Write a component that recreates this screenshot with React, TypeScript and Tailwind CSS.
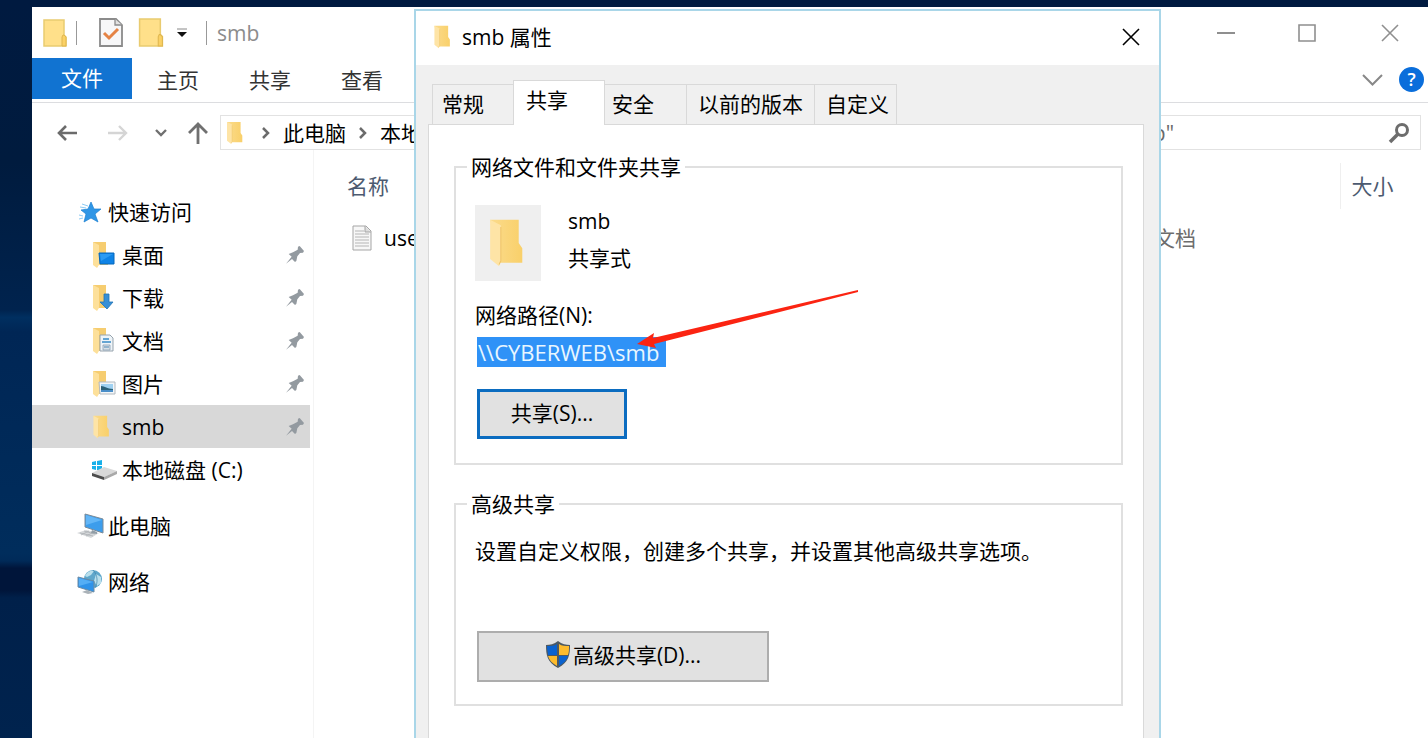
import type { ReactNode } from "react";

type IconProps = { className?: string };

function FolderBase() {
  return (
    <>
      <path d="M3 1h13v15l2 3v5H7z" fill="#f6cd70" />
      <path d="M3 1l6 3v20l-2 3-4-3z" fill="#fde09a" />
    </>
  );
}

function FolderIcon({ className }: IconProps) {
  return (
    <svg viewBox="0 0 20 28" className={className}>
      <defs>
        <linearGradient id="folderBack" x1="0" x2="1">
          <stop offset="0" stopColor="#fbdb8c" />
          <stop offset="1" stopColor="#f9d06a" />
        </linearGradient>
      </defs>
      <path d="M0 1h16v13l2 3v8H5z" fill="url(#folderBack)" />
      <path d="M0 1l6 3v20l-1 3-5-4z" fill="#fee4a6" />
      <path d="M6 5v19l-1 2" fill="none" stroke="#efc469" strokeWidth=".6" />
    </svg>
  );
}

function ClosedFolderIcon({ className }: IconProps) {
  return (
    <svg viewBox="0 0 24 28" className={className}>
      <path d="M1 1h20v15l2 2v9H1z" fill="#ffe08a" stroke="#e9cb70" strokeWidth="1.5" />
      <path d="M19 27v-9l1-2h1l2 2v9z" fill="#fbd165" stroke="#dfb64e" />
    </svg>
  );
}

function PropertiesIcon() {
  return (
    <svg viewBox="0 0 24 29" className="w-6 h-[29px]">
      <path d="M1 1h16l6 6v21H1z" fill="#f7f7f8" stroke="#8b8b8b" strokeWidth="1.8" />
      <path d="M16 1v6h7" fill="#e2e2e2" stroke="#8b8b8b" strokeWidth="1.3" />
      <path d="M5 15l5 5 9-9" fill="none" stroke="#e58345" strokeWidth="3" />
    </svg>
  );
}

function StarIcon() {
  return (
    <svg viewBox="0 0 24 24" className="w-6 h-6">
      <path
        d="M13 2l3 7h7l-6 5 3 8-7-4-7 4 2-8-5-4 7-1z"
        fill="#2f96e6"
        stroke="#1b7fd1"
        strokeWidth=".7"
      />
      <path d="M4 4l6 2M2 7l6 1M1 15l4 1M1 19l4-1" stroke="#8ecbf4" strokeWidth="1" />
    </svg>
  );
}

function DesktopIcon() {
  return (
    <svg viewBox="0 0 26 28" className="w-[26px] h-7">
      <FolderBase />
      <path d="M9 12h15v11H10z" fill="#0f83e6" stroke="#0768bd" />
      <path d="M10 13h13l-12 7z" fill="#2c9bf3" />
    </svg>
  );
}

function DownloadIcon() {
  return (
    <svg viewBox="0 0 26 28" className="w-[26px] h-7">
      <FolderBase />
      <path d="M14 10h5v8h4l-6 7-7-7h4z" fill="#378fd6" stroke="#2273b5" strokeWidth=".8" />
    </svg>
  );
}

function DocumentsIcon() {
  return (
    <svg viewBox="0 0 26 28" className="w-[26px] h-7">
      <FolderBase />
      <path d="M10 8h10l3 3v13H10z" fill="#eef4f8" stroke="#97a3ad" />
      <path d="M13 12h6M12 15h9" stroke="#398ac5" strokeWidth="1.6" />
      <path d="M13 18h7v5h-7z" fill="#d7e1e8" stroke="#8aa0b1" strokeWidth=".8" />
      <path d="M14 20h5" stroke="#4f87b3" />
    </svg>
  );
}

function PicturesIcon() {
  return (
    <svg viewBox="0 0 26 28" className="w-[26px] h-7">
      <FolderBase />
      <path d="M9 12h16v12H10z" fill="#f3f6f8" stroke="#b2b9bf" />
      <path d="M11 14h12v8H11z" fill="#9fd1f1" />
      <path d="M11 16c4 0 6 3 12 3v3H11z" fill="#2b6178" />
      <path d="M11 20h12v2H11z" fill="#4b8fc9" />
    </svg>
  );
}

function DriveIcon() {
  return (
    <svg viewBox="0 0 28 24" className="w-7 h-6">
      <path d="M2 4l4-1v4H2zM7 3l5-1v5H7zM2 8h4v4l-4-1zM7 8h5v5l-5-1z" fill="#17b0ea" />
      <path d="M2 15l12-6 13 4-13 6z" fill="#d9d9d9" />
      <path d="M2 15l12 4v3L2 18z" fill="#4d4d4d" />
      <path d="M14 19l13-6v3l-13 6z" fill="#a9a9a9" />
    </svg>
  );
}

function ComputerIcon() {
  return (
    <svg viewBox="0 0 28 28" className="w-7 h-7">
      <path d="M9 2l18 5v14L9 15z" fill="#3c9dec" stroke="#7c8b98" />
      <path d="M10 3l16 5-16 5z" fill="#62b6f7" />
      <path d="M1 21l9-3 13 3-8 5z" fill="#d5d8da" />
      <path d="M4 21l13 3M8 19l11 3M5 23l8-4M10 24l8-4" stroke="#a7acb0" strokeWidth=".7" />
      <path d="M16 18l5 2v2l-6-1z" fill="#919da6" />
    </svg>
  );
}

function NetworkIcon() {
  return (
    <svg viewBox="0 0 28 28" className="w-7 h-7">
      <circle cx="17" cy="11" r="9" fill="#5fa7cb" />
      <path d="M9 8c2-5 7-6 9-5l-3 4-4 2zM20 6l5 3v6l-4 3-3-5z" fill="#b9dfec" />
      <path d="M17 2c5 5 5 13 2 18" fill="none" stroke="#3f86ae" strokeWidth=".7" />
      <path d="M2 9l16 4v11L2 19z" fill="#2f93e9" stroke="#6c8ba4" />
      <path d="M3 10l14 4-14 4z" fill="#54aef5" />
      <path d="M6 24l5-2 6 3-5 1z" fill="#aab2b8" />
    </svg>
  );
}

function PinIcon() {
  return (
    <svg viewBox="0 0 54 54" className="w-[18px] h-[18px]">
      <path
        d="M0 53l17-21-9-8 13-5 14-8 1-9 5-2 13 15-3 5-9 1-8 10-3 14-4 3-9-9z"
        fill="#939aa0"
      />
    </svg>
  );
}

function TextFileIcon() {
  return (
    <svg viewBox="0 0 20 26" className="w-5 h-[26px]">
      <path d="M1 1h13l5 5v19H1z" fill="#f7f7f7" stroke="#a5a5a5" />
      <path d="M13 1v6h6" fill="#ddd" stroke="#a5a5a5" />
      <path d="M3 6h9M3 9h14M3 12h14M3 15h14M3 18h14M3 21h14" stroke="#b5b5b5" strokeWidth="1.2" />
    </svg>
  );
}

function ShieldIcon() {
  return (
    <svg viewBox="0 0 26 28" className="w-[26px] h-7">
      <path d="M13 0c4 3 8 4 12 4 0 10-1 17-12 23C2 21 1 14 1 4c4 0 8-1 12-4z" fill="#4d5962" />
      <path d="M12 3v11H3c0-3-1-5-1-9 4 0 7 0 10-2z" fill="#0a62cf" />
      <path d="M14 3c3 2 6 2 10 2 0 4 0 6-1 9h-9z" fill="#fdbb2c" />
      <path d="M3 15h9v10c-5-3-8-6-9-10z" fill="#fdbb2c" />
      <path d="M14 15h9c-1 4-4 7-9 10z" fill="#0a62cf" />
    </svg>
  );
}

function CloseIcon({ className }: IconProps) {
  return (
    <svg viewBox="0 0 18 18" className={className}>
      <path d="M1 1l16 16M17 1L1 17" fill="none" stroke="currentColor" strokeWidth="1.6" />
    </svg>
  );
}

function Crumb() {
  return (
    <svg viewBox="0 0 10 12" className="w-[10px] h-3">
      <path d="M2 1l5 5-5 5" fill="none" stroke="#6b6b6b" strokeWidth="2.5" />
    </svg>
  );
}

const quickAccess: { label: string; icon: ReactNode; pinned?: boolean; active?: boolean }[] = [
  { label: "桌面", icon: <DesktopIcon />, pinned: true },
  { label: "下载", icon: <DownloadIcon />, pinned: true },
  { label: "文档", icon: <DocumentsIcon />, pinned: true },
  { label: "图片", icon: <PicturesIcon />, pinned: true },
  { label: "smb", icon: <FolderIcon className="ml-[3px] w-[18px] h-6" />, pinned: true, active: true },
  { label: "本地磁盘 (C:)", icon: <DriveIcon /> },
];

const roots = [
  { label: "此电脑", icon: <ComputerIcon /> },
  { label: "网络", icon: <NetworkIcon /> },
];

const dialogTabs = [
  { label: "常规", style: "w-[81px] h-10 pb-[2px] pl-[9px] border-r-0" },
  { label: "共享", style: "w-[92px] h-[45px] pl-3 pb-[6px] bg-white border-b-0 -mb-px z-10" },
  { label: "安全", style: "w-[82px] h-10 pb-[2px] pl-[7px] border-l-0" },
  { label: "以前的版本", style: "w-32 h-10 pb-[2px] pl-[11px] border-l-0" },
  { label: "自定义", style: "w-[82px] h-10 pb-[2px] pl-[11px] border-l-0" },
];

function TitleBar() {
  return (
    <header className="flex h-[51px] items-center justify-between pl-[11px] pr-[29px]">
      <div className="flex items-center">
        <ClosedFolderIcon className="w-6 h-7" />
        <span className="ml-[9px] h-6 w-px bg-[#999]" />
        <button aria-label="属性" className="ml-[22px]">
          <PropertiesIcon />
        </button>
        <button aria-label="新建文件夹" className="ml-[15px]">
          <ClosedFolderIcon className="w-[26px] h-[29px]" />
        </button>
        <button aria-label="自定义快速访问工具栏" className="ml-3">
          <svg viewBox="0 0 12 10" className="w-3 h-[10px]">
            <path d="M1 1h10" stroke="#888" />
            <path d="M1 4h10l-5 5z" fill="#111" />
          </svg>
        </button>
        <span className="ml-[18px] h-6 w-px bg-[#999]" />
        <h1 className="ml-[10px] text-[#8c8c8c]">smb</h1>
      </div>
      <div className="flex items-center text-[#8f8f8f]">
        <button aria-label="最小化" className="mr-[63px]">
          <svg viewBox="0 0 18 18" className="w-[18px] h-[18px]">
            <path d="M0 9h18" stroke="currentColor" strokeWidth="2" />
          </svg>
        </button>
        <button aria-label="最大化" className="mr-[65px]">
          <svg viewBox="0 0 18 18" className="w-[18px] h-[18px]">
            <path d="M1 1h16v16H1z" fill="none" stroke="currentColor" strokeWidth="1.6" />
          </svg>
        </button>
        <button aria-label="关闭">
          <CloseIcon className="w-[18px] h-[18px]" />
        </button>
      </div>
    </header>
  );
}

function Ribbon() {
  return (
    <nav className="flex h-[45px] items-start border-b border-[#dcdde0] text-[#333]">
      <button className="h-[41px] w-[100px] bg-[#1173d1] pb-[2px] text-white">文件</button>
      {["主页", "共享", "查看"].map((tab) => (
        <button key={tab} className="h-[43px] w-[92px]">
          {tab}
        </button>
      ))}
      <div className="ml-auto flex h-[43px] items-center gap-4 pr-1">
        <button aria-label="展开功能区">
          <svg viewBox="0 0 21 12" className="w-[21px] h-3">
            <path d="M1 1l9.5 9.5L20 1" fill="none" stroke="#888" strokeWidth="2" />
          </svg>
        </button>
        <button
          aria-label="帮助"
          className="size-[25px] rounded-full bg-[#0a6edb] text-lg leading-[25px] font-semibold text-white"
        >
          ?
        </button>
      </div>
    </nav>
  );
}

function AddressBar() {
  return (
    <div className="flex h-[47px] items-center pt-3 pl-[25px] pr-[7px]">
      <button aria-label="后退">
        <svg viewBox="0 0 20 16" className="w-5 h-4">
          <path d="M20 8H2M9 1L2 8l7 7" fill="none" stroke="#6b6b6b" strokeWidth="2.6" />
        </svg>
      </button>
      <button aria-label="前进" className="ml-[31px]">
        <svg viewBox="0 0 20 16" className="w-5 h-4">
          <path d="M0 8h18M11 1l7 7-7 7" fill="none" stroke="#d5d5d5" strokeWidth="2.4" />
        </svg>
      </button>
      <button aria-label="最近浏览的位置" className="ml-[27px]">
        <svg viewBox="0 0 12 8" className="w-3 h-2">
          <path d="M1 1l5 5 5-5" fill="none" stroke="#707070" strokeWidth="2.4" />
        </svg>
      </button>
      <button aria-label="上移" className="ml-[21px]">
        <svg viewBox="0 0 20 22" className="w-5 h-[22px]">
          <path d="M10 22V2M1 11l9-9 9 9" fill="none" stroke="#707070" strokeWidth="2.8" />
        </svg>
      </button>
      <div className="ml-3 flex h-[35px] flex-1 items-center border border-[#e2e2e2] pl-[6px]">
        <FolderIcon className="w-[17px] h-6" />
        <span className="ml-[17px]">
          <Crumb />
        </span>
        <a href="#computer" className="mx-3 whitespace-nowrap">此电脑</a>
        <Crumb />
        <a href="#drive" className="ml-3 whitespace-nowrap">本地磁盘 (C:)</a>
      </div>
      <div className="ml-3 flex h-[35px] w-[357px] items-center border border-[#e2e2e2] pr-[10px] pl-2">
        <input
          type="search"
          aria-label="搜索"
          placeholder={'搜索"smb"'}
          className="w-full min-w-0 outline-none placeholder:text-[#6a6a6a]"
        />
        <button aria-label="开始搜索">
          <svg viewBox="0 0 22 22" className="w-[22px] h-[22px]">
            <circle cx="14" cy="8" r="5.5" fill="none" stroke="#6d6d6d" strokeWidth="3" />
            <path d="M10 12l-8 8" stroke="#6d6d6d" strokeWidth="3.6" />
          </svg>
        </button>
      </div>
    </div>
  );
}

function Sidebar() {
  return (
    <aside className="w-[282px] shrink-0 border-r border-[#f4f4f4] pt-10 pr-[3px]">
      <a href="#quick" className="flex h-[43px] items-center pl-[46px]">
        <StarIcon />
        <span className="ml-[6px]">快速访问</span>
      </a>
      {quickAccess.map((item) => (
        <a
          key={item.label}
          href={`#${item.label}`}
          className={`flex h-[43px] items-center pr-[6px] pl-[58px] ${item.active ? "bg-[#d8d8d8]" : ""}`}
        >
          <span className="flex w-8 items-center">{item.icon}</span>
          <span>{item.label}</span>
          {item.pinned && (
            <span className="ml-auto">
              <PinIcon />
            </span>
          )}
        </a>
      ))}
      {roots.map((item) => (
        <a key={item.label} href={`#${item.label}`} className="mt-[13px] flex h-[43px] items-center gap-1 pl-11">
          {item.icon}
          {item.label}
        </a>
      ))}
    </aside>
  );
}

function FileList() {
  return (
    <main className="min-w-0 flex-1 pt-[13px]">
      <table className="w-full table-fixed text-left">
        <colgroup>
          <col />
          <col className="w-[241px]" />
          <col className="w-[88px]" />
        </colgroup>
        <thead>
          <tr className="h-[46px] text-[#4c5a70]">
            <th className="pl-[33px] font-normal">名称</th>
            <th className="font-normal" aria-label="类型" />
            <th className="border-l border-[#efefef] pl-[11px] font-normal">大小</th>
          </tr>
        </thead>
        <tbody>
          <tr className="h-[58px]">
            <td className="pl-[38px]">
              <span className="flex items-center gap-3">
                <TextFileIcon />
                user
              </span>
            </td>
            <td className="pl-[13px] text-[#6d6d6d]">文本文档</td>
            <td />
          </tr>
        </tbody>
      </table>
    </main>
  );
}

function PropertiesDialog() {
  return (
    <section
      role="dialog"
      aria-labelledby="dialog-title"
      className="absolute top-[9px] right-[267px] bottom-0 left-[414px] z-20 flex flex-col overflow-hidden border-2 border-b-0 border-[#a9d6e8] bg-[#f0f0f0]"
    >
      <div className="flex h-[54px] shrink-0 items-center bg-white pr-[19px] pb-[3px] pl-[18px]">
        <FolderIcon className="w-[18px] h-6" />
        <h2 id="dialog-title" className="ml-[10px]">smb 属性</h2>
        <button aria-label="关闭" className="ml-auto">
          <CloseIcon className="w-[18px] h-[18px]" />
        </button>
      </div>

      <div role="tablist" className="flex shrink-0 items-end pt-[15px] pl-4">
        {dialogTabs.map((tab) => (
          <button
            key={tab.label}
            role="tab"
            aria-selected={tab.label === "共享"}
            className={`relative border border-b-0 border-[#d9d9d9] text-left whitespace-nowrap ${tab.style}`}
          >
            {tab.label}
          </button>
        ))}
      </div>

      <div className="mr-[15px] ml-3 flex-1 border border-b-0 border-[#d9d9d9] bg-white pt-7 pr-5 pl-[25px]">
        <fieldset className="border-2 border-[#e0e0e0] px-[11px] pb-6">
          <legend className="px-1">网络文件和文件夹共享</legend>
          <div className="px-2 pt-6">
            <div className="flex gap-[27px]">
              <div className="flex h-[76px] w-[66px] items-center justify-center bg-[#efefef]">
                <FolderIcon className="w-10 h-[50px]" />
              </div>
              <div className="flex flex-col gap-[9px] pt-[2px]">
                <p>smb</p>
                <p>共享式</p>
              </div>
            </div>
            <label htmlFor="network-path" className="mt-5 block">
              网络路径(N):
            </label>
            <input
              id="network-path"
              readOnly
              value={"\\\\CYBERWEB\\smb"}
              className="mt-2 ml-[2px] block h-[30px] w-[189px] bg-[#2f92f7] pl-px text-[22px] text-[#e8f6ff] outline-none"
            />
            <button className="mt-[22px] ml-[2px] block h-[50px] w-[150px] border-3 border-[#0b6cc0] bg-[#e1e1e1] pb-[2px]">
              共享(S)...
            </button>
          </div>
        </fieldset>

        <fieldset className="mt-[25px] border-2 border-[#e0e0e0] px-[11px] pb-[22px]">
          <legend className="px-1">高级共享</legend>
          <div className="px-2 pt-[19px]">
            <p>设置自定义权限，创建多个共享，并设置其他高级共享选项。</p>
            <button className="mt-[66px] ml-[2px] flex h-[51px] w-[292px] items-center justify-center gap-[2px] border-2 border-[#adadad] bg-[#e1e1e1] pb-1">
              <ShieldIcon />
              高级共享(D)...
            </button>
          </div>
        </fieldset>
      </div>

      {/* Red arrow pointing at the share path */}
      <svg
        viewBox="0 0 224 60"
        className="pointer-events-none absolute top-[277px] left-[220px] h-[60px] w-56"
      >
        <path d="M1 56l17-11-1 5L222 2v2L18 56l2 4z" fill="#fb2412" />
      </svg>
    </section>
  );
}

export default function App() {
  return (
    <div className="relative flex h-screen overflow-hidden bg-[linear-gradient(180deg,#001a40_0%,#001b3e_22%,#00234e_42%,#002f60_43%,#002655_45%,#002d5c_75%,#002a58_76%,#00153a_77%,#00153a_80%,#00204a_81%,#00234e_100%)] pt-[7px] pl-8 font-['Open_Sans','Noto_Sans_CJK_SC',sans-serif] text-[21px] leading-7 text-black">
      <div className="flex min-w-0 flex-1 flex-col bg-white">
        <TitleBar />
        <Ribbon />
        <AddressBar />
        <div className="flex flex-1">
          <Sidebar />
          <FileList />
        </div>
      </div>
      <PropertiesDialog />
    </div>
  );
}
